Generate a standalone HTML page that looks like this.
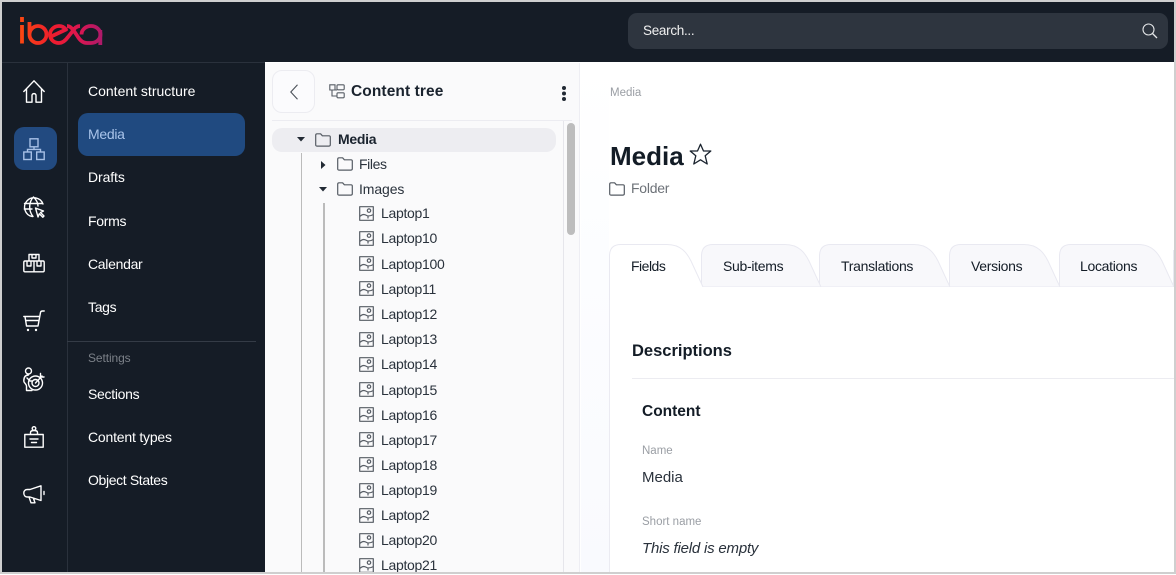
<!DOCTYPE html>
<html lang="en"><head><meta charset="utf-8"><title>Media</title>
<style>
html,body{margin:0;padding:0;background:#fff}
body{width:1176px;height:574px;position:relative;overflow:hidden;font-family:"Liberation Sans",sans-serif;font-size:14px;color:#131c26}
.a{position:absolute}
.t{position:absolute;white-space:nowrap;line-height:20px;height:20px}
.n{color:#fff;left:88px;font-size:14px;letter-spacing:-.3px}
.l{left:381px;font-size:14px;color:#2a323c;letter-spacing:-.3px}
.tab{font-size:14px;color:#131c26;letter-spacing:-.3px}
svg{position:absolute;overflow:visible}
.w{fill:none;stroke:#fff;stroke-width:1.4;stroke-linecap:round;stroke-linejoin:round}
.g{fill:none;stroke:#565c64;stroke-width:1.2;stroke-linejoin:round}
</style></head><body>
<svg width="0" height="0" style="position:absolute"><defs>
<symbol id="fo" viewBox="0 0 16 14"><path d="M.7 2.2Q.7.8 2 .8H5.6L7.4 2.8H14Q15.3 2.8 15.3 4V11.8Q15.3 13.1 14 13.1H2Q.7 13.1.7 11.8Z" class="g"/></symbol>
<symbol id="im" viewBox="0 0 15 15"><rect x=".7" y=".7" width="13.6" height="13.6" class="g"/><circle cx="10" cy="4.6" r="1.7" class="g"/><path d="M1 10.3C4 7.5 6 8.5 8 9.6C10 10.6 12 9.7 14.2 8.6M9 10.5V12.5" class="g"/></symbol>
</defs></svg>

<!-- top bar -->
<div class="a" style="left:0;top:0;width:1176px;height:62px;background:#151c26"></div>
<div class="a" style="left:0;top:62px;width:265px;height:1px;background:#2a313c"></div>
<svg style="left:18px;top:15px" width="86" height="32" viewBox="0 0 86 32" fill="none">
<defs><linearGradient id="lg" x1="0" x2="86" y1="0" y2="0" gradientUnits="userSpaceOnUse"><stop offset="0" stop-color="#fb4a10"/><stop offset=".4" stop-color="#ef1d2d"/><stop offset=".7" stop-color="#dc1650"/><stop offset="1" stop-color="#a91a6c"/></linearGradient></defs>
<g stroke="url(#lg)" stroke-width="3.8" stroke-linecap="butt" stroke-linejoin="round">
<path d="M4 2V7M4 10V28.500"/>
<path d="M11.500 7V19.500A8.500 8.500 0 1 0 28.500 19.500A8.500 8.500 0 1 0 11.500 19.500"/>
<path d="M32 22L48 14.500C46 12 43.500 11 41 11C36 11 32 15 32 19.500C32 24.500 36 28 41 28C45 28 47.500 25.500 50 22L54 17C56 13.500 58.500 11 62 11"/>
<path d="M49 11C52 11 54 13 56 16L60 22C62.500 26 65 28 69 28H73A9.500 8.500 0 1 0 63.500 19.500"/>
<path d="M82.300 15V30"/>
</g></svg>
<div class="a" style="left:628px;top:13px;width:540px;height:36px;border-radius:9px;background:#2e353f"></div>
<div class="t" style="left:643px;top:21px;color:#f0f0f0;font-size:13.500px;letter-spacing:-.3px">Search...</div>
<svg style="left:1142px;top:23px" width="16" height="16" viewBox="0 0 16 16" fill="none" stroke="#e4e6e8" stroke-width="1.1"><circle cx="6.500" cy="6.500" r="5.500"/><path d="M10.500 10.500L15 15" stroke-width="1.300"/></svg>

<!-- sidebar -->
<div class="a" style="left:0;top:63px;width:265px;height:511px;background:#151c26"></div>
<div class="a" style="left:67px;top:63px;width:1px;height:511px;background:#2a313c"></div>
<div class="a" style="left:14px;top:127px;width:43px;height:43px;border-radius:10px;background:#224a80"></div>
<div class="a" style="left:78px;top:113px;width:167px;height:43px;border-radius:10px;background:#204a80"></div>
<div class="a" style="left:67px;top:341px;width:189px;height:1px;background:#343b46"></div>

<svg style="left:23px;top:80px" width="22" height="23" viewBox="0 0 22 23"><path class="w" d="M.8 11.500L11 .8L21.200 11.500M3.500 9V22.200H9V15.500C9 13 13 13 13 15.500V22.200H18.500V9"/></svg>
<svg style="left:23px;top:138px" width="22" height="22" viewBox="0 0 22 22" fill="none" stroke="#a7c0e6" stroke-width="1.400"><rect x="7" y=".8" width="8" height="8"/><rect x=".8" y="14" width="7.500" height="7.500"/><rect x="13.700" y="14" width="7.500" height="7.500"/><path d="M11 8.800V11.400H4.500V14M11 11.400H17.500V14"/></svg>
<svg style="left:23px;top:196px" width="22" height="22" viewBox="0 0 22 22"><path class="w" d="M20 8A9.500 9.500 0 1 0 9 20.500M1.500 7.500H19M1.300 13H9M10.500 1C5.500 6 5.500 15 10 20.500M10.500 1C13.500 4 15 7 15 10M12.500 12L20.500 15L17.500 16.500L21 20L19.800 21.200L16.300 17.700L15 21Z"/></svg>
<svg style="left:23px;top:253px" width="22" height="20" viewBox="0 0 22 20"><path class="w" d="M6 8V1.500H16V8M.8 9.500Q.8 8 2 8H20Q21.200 8 21.200 9.500V17.500Q21.200 18.800 20 18.800H2Q.8 18.800.8 17.500ZM11 8V18.800M9 1.500V5H13V1.500M4 8V13H8V8M14 8V13H18V8"/></svg>
<svg style="left:23px;top:310px" width="22" height="22" viewBox="0 0 22 22"><path class="w" d="M.8 6.500H16.500M2 6.500L3.500 16H15L17.500 2.500Q17.800 1 19.500 1H21.200M3 10.500H16"/><circle cx="5" cy="20" r="1.200" fill="#fff"/><circle cx="13" cy="20" r="1.200" fill="#fff"/></svg>
<svg style="left:23px;top:367px" width="22" height="25" viewBox="0 0 22 25"><g class="w"><circle cx="5.500" cy="4" r="3"/><path d="M5.500 8C1.500 8 .8 11 .8 14C.8 16 3.500 17 3.500 19V23.500H9M4 11L7 14H9"/><circle cx="12.500" cy="16" r="7"/><circle cx="12.500" cy="16" r="3.500"/><path d="M12.500 16L19 9M17.500 6.500V10H21"/></g></svg>
<svg style="left:24px;top:426px" width="20" height="22" viewBox="0 0 20 22"><path class="w" d="M.8 8.500H19.200V21.200H.8ZM6 13H14M7.500 16.500H12.500M6.500 8.500V6.500C6.500 5 8 4.500 10 4.500C12 4.500 13.500 5 13.500 6.500V8.500"/><circle class="w" cx="10" cy="2.500" r="1.800"/></svg>
<svg style="left:23px;top:485px" width="22" height="19" viewBox="0 0 22 19"><path class="w" d="M18 .8V15.500L7 12H4.500C2 12 .8 10 .8 8C.8 6 2 4.500 4.500 4.500H7ZM6 12L8 17.800H12L10.500 13.500M21 6.500V9.500"/></svg>

<div class="t n" style="top:81px;letter-spacing:0">Content structure</div>
<div class="t n" style="top:124px;color:#a9c4ea">Media</div>
<div class="t n" style="top:167px;letter-spacing:-.1px">Drafts</div>
<div class="t n" style="top:211px">Forms</div>
<div class="t n" style="top:254px">Calendar</div>
<div class="t n" style="top:297px">Tags</div>
<div class="t" style="left:88px;top:348px;font-size:12px;color:#7b8088;letter-spacing:-.1px">Settings</div>
<div class="t n" style="top:384px">Sections</div>
<div class="t n" style="top:427px;letter-spacing:-.2px">Content types</div>
<div class="t n" style="top:470px;letter-spacing:-.36px">Object States</div>

<!-- tree panel -->
<div class="a" style="left:265px;top:63px;width:315px;height:511px;background:#fafafb;border-right:1px solid #eeeef3;box-sizing:border-box"></div>
<div class="a" style="left:272px;top:70px;width:43px;height:43px;box-sizing:border-box;border:1px solid #ececf1;border-radius:10px;background:#fbfbfd"></div>
<svg style="left:290px;top:84px" width="8" height="16" viewBox="0 0 8 16" fill="none" stroke="#4a5058" stroke-width="1.100"><path d="M7.500 .8L.8 8L7.500 15.200"/></svg>
<svg style="left:329px;top:84px" width="16" height="15" viewBox="0 0 16 15" fill="none" stroke="#565c64" stroke-width="1.100"><path d="M.8 .8H6V6H.8ZM3 6V12H8M3 6H8"/><rect x="8" y=".8" width="7.200" height="5" rx="1"/><rect x="8" y="8.800" width="7.200" height="5" rx="1"/></svg>
<div class="t" style="left:351px;top:82px;font-size:15.500px;font-weight:bold;color:#1a232e;letter-spacing:.1px">Content tree</div>
<svg style="left:561px;top:85px" width="6" height="16" viewBox="0 0 6 16" fill="#222a34"><circle cx="3" cy="3" r="2"/><circle cx="3" cy="8.500" r="2"/><circle cx="3" cy="14" r="2"/></svg>
<div class="a" style="left:272px;top:120px;width:300px;height:1px;background:#ececf1"></div>
<div class="a" style="left:563px;top:121px;width:1px;height:453px;background:#e6e6eb"></div>
<div class="a" style="left:567px;top:123px;width:8px;height:112px;border-radius:4px;background:#bdbdbd"></div>
<div class="a" style="left:272px;top:128px;width:284px;height:24px;border-radius:10px;background:#ededf1"></div>
<div class="a" style="left:301px;top:153px;width:1px;height:421px;background:#bbb"></div>
<div class="a" style="left:323px;top:203px;width:1.500px;height:371px;background:#bbb"></div>
<svg style="left:297px;top:137px" width="8" height="5" viewBox="0 0 8 5" fill="#222a34"><path d="M0 0H8L4 4.500Z"/></svg>
<svg style="left:321px;top:161px" width="5" height="8" viewBox="0 0 5 8" fill="#222a34"><path d="M0 0V8L4.500 4Z"/></svg>
<svg style="left:319px;top:187px" width="8" height="5" viewBox="0 0 8 5" fill="#222a34"><path d="M0 0H8L4 4.500Z"/></svg>
<svg style="left:315px;top:133px" width="16" height="14"><use href="#fo"/></svg>
<svg style="left:337px;top:157px" width="16" height="14"><use href="#fo"/></svg>
<svg style="left:337px;top:182px" width="16" height="14"><use href="#fo"/></svg>
<div class="t" style="left:338px;top:129px;font-weight:bold;color:#1a232e;letter-spacing:-.3px">Media</div>
<div class="t" style="left:359px;top:154px;color:#2a323c;letter-spacing:-.4px">Files</div>
<div class="t" style="left:359px;top:179px;color:#2a323c;letter-spacing:-.1px">Images</div>

<svg style="left:359px;top:206px" width="15" height="15"><use href="#im"/></svg><div class="t l" style="top:203px">Laptop1</div>
<svg style="left:359px;top:231px" width="15" height="15"><use href="#im"/></svg><div class="t l" style="top:228px">Laptop10</div>
<svg style="left:359px;top:256px" width="15" height="15"><use href="#im"/></svg><div class="t l" style="top:254px">Laptop100</div>
<svg style="left:359px;top:281px" width="15" height="15"><use href="#im"/></svg><div class="t l" style="top:279px">Laptop11</div>
<svg style="left:359px;top:306px" width="15" height="15"><use href="#im"/></svg><div class="t l" style="top:304px">Laptop12</div>
<svg style="left:359px;top:332px" width="15" height="15"><use href="#im"/></svg><div class="t l" style="top:329px">Laptop13</div>
<svg style="left:359px;top:357px" width="15" height="15"><use href="#im"/></svg><div class="t l" style="top:354px">Laptop14</div>
<svg style="left:359px;top:382px" width="15" height="15"><use href="#im"/></svg><div class="t l" style="top:380px">Laptop15</div>
<svg style="left:359px;top:407px" width="15" height="15"><use href="#im"/></svg><div class="t l" style="top:405px">Laptop16</div>
<svg style="left:359px;top:432px" width="15" height="15"><use href="#im"/></svg><div class="t l" style="top:430px">Laptop17</div>
<svg style="left:359px;top:457px" width="15" height="15"><use href="#im"/></svg><div class="t l" style="top:455px">Laptop18</div>
<svg style="left:359px;top:483px" width="15" height="15"><use href="#im"/></svg><div class="t l" style="top:480px">Laptop19</div>
<svg style="left:359px;top:508px" width="15" height="15"><use href="#im"/></svg><div class="t l" style="top:505px">Laptop2</div>
<svg style="left:359px;top:533px" width="15" height="15"><use href="#im"/></svg><div class="t l" style="top:530px">Laptop20</div>
<svg style="left:359px;top:558px" width="15" height="15"><use href="#im"/></svg><div class="t l" style="top:555px">Laptop21</div>

<!-- main -->
<div class="a" style="left:581px;top:63px;width:28px;height:511px;background:linear-gradient(#fff 0,#fcfdff 40%,#f9fafe 100%)"></div>
<div class="a" style="left:609px;top:270px;width:1px;height:304px;background:#ebebf2"></div>
<div class="t" style="left:610px;top:82px;font-size:11.500px;color:#9a9ea4;padding-top:1px">Media</div>
<div class="t" style="left:610px;top:141px;height:30px;line-height:30px;font-size:26px;font-weight:bold;color:#131c26">Media</div>
<svg style="left:689px;top:143px" width="23" height="23" viewBox="0 0 23 23" fill="none" stroke="#1a232e" stroke-width="1.300" stroke-linejoin="round"><path d="M11.500 1.200L14.500 8H21.800L16.200 12.800L18.200 21L11.500 16.800L4.800 21L6.800 12.800L1.200 8H8.500Z"/></svg>
<svg style="left:609px;top:182px" width="16" height="14"><use href="#fo"/></svg>
<div class="t" style="left:631px;top:178px;color:#6d7278;letter-spacing:-.25px">Folder</div>

<!-- tabs -->
<svg style="left:0;top:0" width="1176" height="574" fill="none" stroke="#e9e9f1" stroke-width="1">
<path d="M1059.500 287V256Q1059.500 244.500 1071 244.500H1138C1152 244.500 1158 253 1162 261L1174 287Z" fill="#f8f8fb"/>
<path d="M949.500 287V256Q949.500 244.500 961 244.500H1024C1038 244.500 1044 253 1048 261L1060 287Z" fill="#f8f8fb"/>
<path d="M819.500 287V256Q819.500 244.500 831 244.500H914C928 244.500 934 253 938 261L950 287Z" fill="#f8f8fb"/>
<path d="M701.500 287V256Q701.500 244.500 713 244.500H785C799 244.500 805 253 809 261L821 287Z" fill="#f8f8fb"/>
<path d="M609.500 300V256Q609.500 244.500 621 244.500H667C681 244.500 687 253 691 261L703 287H703" fill="#fff"/>
<path d="M1173.500 287V250" />
</svg>
<div class="a" style="left:610px;top:287px;width:564px;height:287px;background:#fff"></div>
<div class="t tab" style="left:631px;top:256px;letter-spacing:-.5px">Fields</div>
<div class="t tab" style="left:723px;top:256px">Sub-items</div>
<div class="t tab" style="left:841px;top:256px">Translations</div>
<div class="t tab" style="left:971px;top:256px">Versions</div>
<div class="t tab" style="left:1080px;top:256px">Locations</div>

<div class="t" style="left:632px;top:341px;font-size:16.500px;font-weight:bold;color:#131c26">Descriptions</div>
<div class="a" style="left:632px;top:378px;width:542px;height:1px;background:#ececf1"></div>
<div class="t" style="left:642px;top:402px;font-size:15.500px;font-weight:bold;color:#131c26">Content</div>
<div class="t" style="left:642px;top:441px;font-size:11.500px;color:#9a9ea4">Name</div>
<div class="t" style="left:642px;top:468px;font-size:15px;color:#2a323c">Media</div>
<div class="t" style="left:642px;top:512px;font-size:11.500px;color:#9a9ea4">Short name</div>
<div class="t" style="left:642px;top:539px;font-size:15px;font-style:italic;color:#2a323c;letter-spacing:-.2px">This field is empty</div>

<!-- frame -->
<div class="a" style="left:0;top:0;width:1176px;height:574px;box-sizing:border-box;border:2px solid #cfcfcf;pointer-events:none"></div>
</body></html>
